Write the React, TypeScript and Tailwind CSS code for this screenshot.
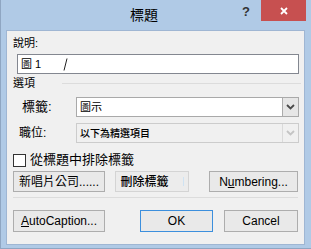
import React from "react";

function Chevron({ disabled = false }: { disabled?: boolean }) {
  return (
    <svg width="9" height="6" viewBox="0 0 9 6">
      <path
        d="M1 1 L4.5 4.5 L8 1"
        fill="none"
        stroke={disabled ? "#c4c4c4" : "#4a4a4a"}
        strokeWidth="1.8"
      />
    </svg>
  );
}

function Btn({
  children,
  className = "",
}: {
  children: React.ReactNode;
  className?: string;
}) {
  return (
    <div
      className={
        "flex items-center justify-center border bg-[#e9e9e9] text-[12px] text-black " +
        className
      }
    >
      {children}
    </div>
  );
}

export default function App() {
  return (
    <div className="flex h-[249px] w-[311px] flex-col border-l border-b border-[#8fa6c2] bg-[#b0cae6] font-['Liberation_Sans','Noto_Sans_CJK_TC',sans-serif] text-black">
      {/* title bar */}
      <div className="flex h-[30px] items-start">
        <div className="pl-[129px] pt-[6px] text-[14px] leading-[18px]">標題</div>
        <div className="ml-auto pt-[5px] text-[13px] font-bold leading-[14px] text-[#333]">?</div>
        <div className="ml-[11px] mr-[5px] flex h-[21px] w-[45px] items-center justify-center bg-[#c75050]">
          <svg width="8" height="8" viewBox="0 0 8 8">
            <path d="M1 1 L7 7 M7 1 L1 7" stroke="#fff" strokeWidth="1.8" />
          </svg>
        </div>
      </div>

      {/* client area */}
      <div className="ml-[5px] mr-[6px] flex h-[215px] flex-col border border-[#9fb6d3] bg-[#f0f0f0]">
        <div className="ml-[6px] mt-[5px] h-[14px] text-[11px] leading-[14px]">說明:</div>
        <div className="ml-[10px] mt-[4px] flex h-[20px] w-[282px] items-center border border-[#838790] bg-white pl-[3px] text-[11px]">
          <span>圖</span>
          <span className="ml-[3px]">1</span>
          <svg className="ml-[22px]" width="5" height="13" viewBox="0 0 5 13">
            <path d="M4 0.5 L1 12.5" stroke="#222" strokeWidth="1" />
          </svg>
        </div>

        <div className="mt-[2px] flex h-[14px] items-center">
          <div className="ml-[6px] text-[11px] leading-[14px]">選項</div>
          <div className="ml-[27px] h-px w-[239px] bg-[#dcdcdc]" />
        </div>

        <div className="mt-[7px] flex h-[20px] items-center">
          <div className="ml-[15px] w-[54px] text-[13px] leading-[16px]">標籤:</div>
          <div className="flex h-[20px] w-[223px] items-center border border-[#a9a9a9] bg-white">
            <div className="flex-1 pl-[3px] text-[11px]">圖示</div>
            <div className="flex h-[18px] w-[16px] items-center justify-center border-l border-[#acacac] bg-[#e6e6e6]">
              <Chevron />
            </div>
          </div>
        </div>

        <div className="mt-[6px] flex h-[20px] items-center">
          <div className="ml-[12px] w-[57px] text-[12px] leading-[16px]">職位:</div>
          <div className="flex h-[20px] w-[223px] items-center border border-[#cccccc] bg-[#f0f0f0]">
            <div className="flex-1 pl-[3px] text-[10px] font-medium">以下為精選項目</div>
            <div className="flex h-[18px] w-[16px] items-center justify-center border-l border-[#dadada] bg-[#f0f0f0]">
              <Chevron disabled />
            </div>
          </div>
        </div>

        <div className="mt-[9px] flex h-[16px] items-center">
          <div className="ml-[6px] h-[13px] w-[13px] border border-[#333] bg-white" />
          <div className="ml-[4px] text-[13px] leading-[16px]">從標題中排除標籤</div>
        </div>

        <div className="mt-[3px] flex h-[21px]">
          <Btn className="ml-[6px] w-[92px] border-[#adadad] text-[11px]">新唱片公司......</Btn>
          <Btn className="ml-[10px] w-[74px] border-[#d4d4d4] bg-[#ececec] text-[10.5px] font-medium">
            <span>刪除標籤</span>
            <span className="ml-[14px] h-[9px] w-px bg-[#cfe3f3]" />
          </Btn>
          <Btn className="ml-[20px] w-[89px] border-[#adadad]">
            N<span className="underline">u</span>mbering...
          </Btn>
        </div>

        <div className="ml-[6px] mt-[5px] h-px w-[285px] bg-[#dcdcdc]" />

        <div className="mt-[12px] flex h-[22px]">
          <Btn className="ml-[6px] w-[92px] border-[#adadad]">
            <span className="underline">A</span>utoCaption...
          </Btn>
          <Btn className="ml-[35px] w-[73px] border-[#3c8fdd]">OK</Btn>
          <Btn className="ml-[11px] w-[74px] border-[#adadad]">Cancel</Btn>
        </div>
      </div>
    </div>
  );
}
